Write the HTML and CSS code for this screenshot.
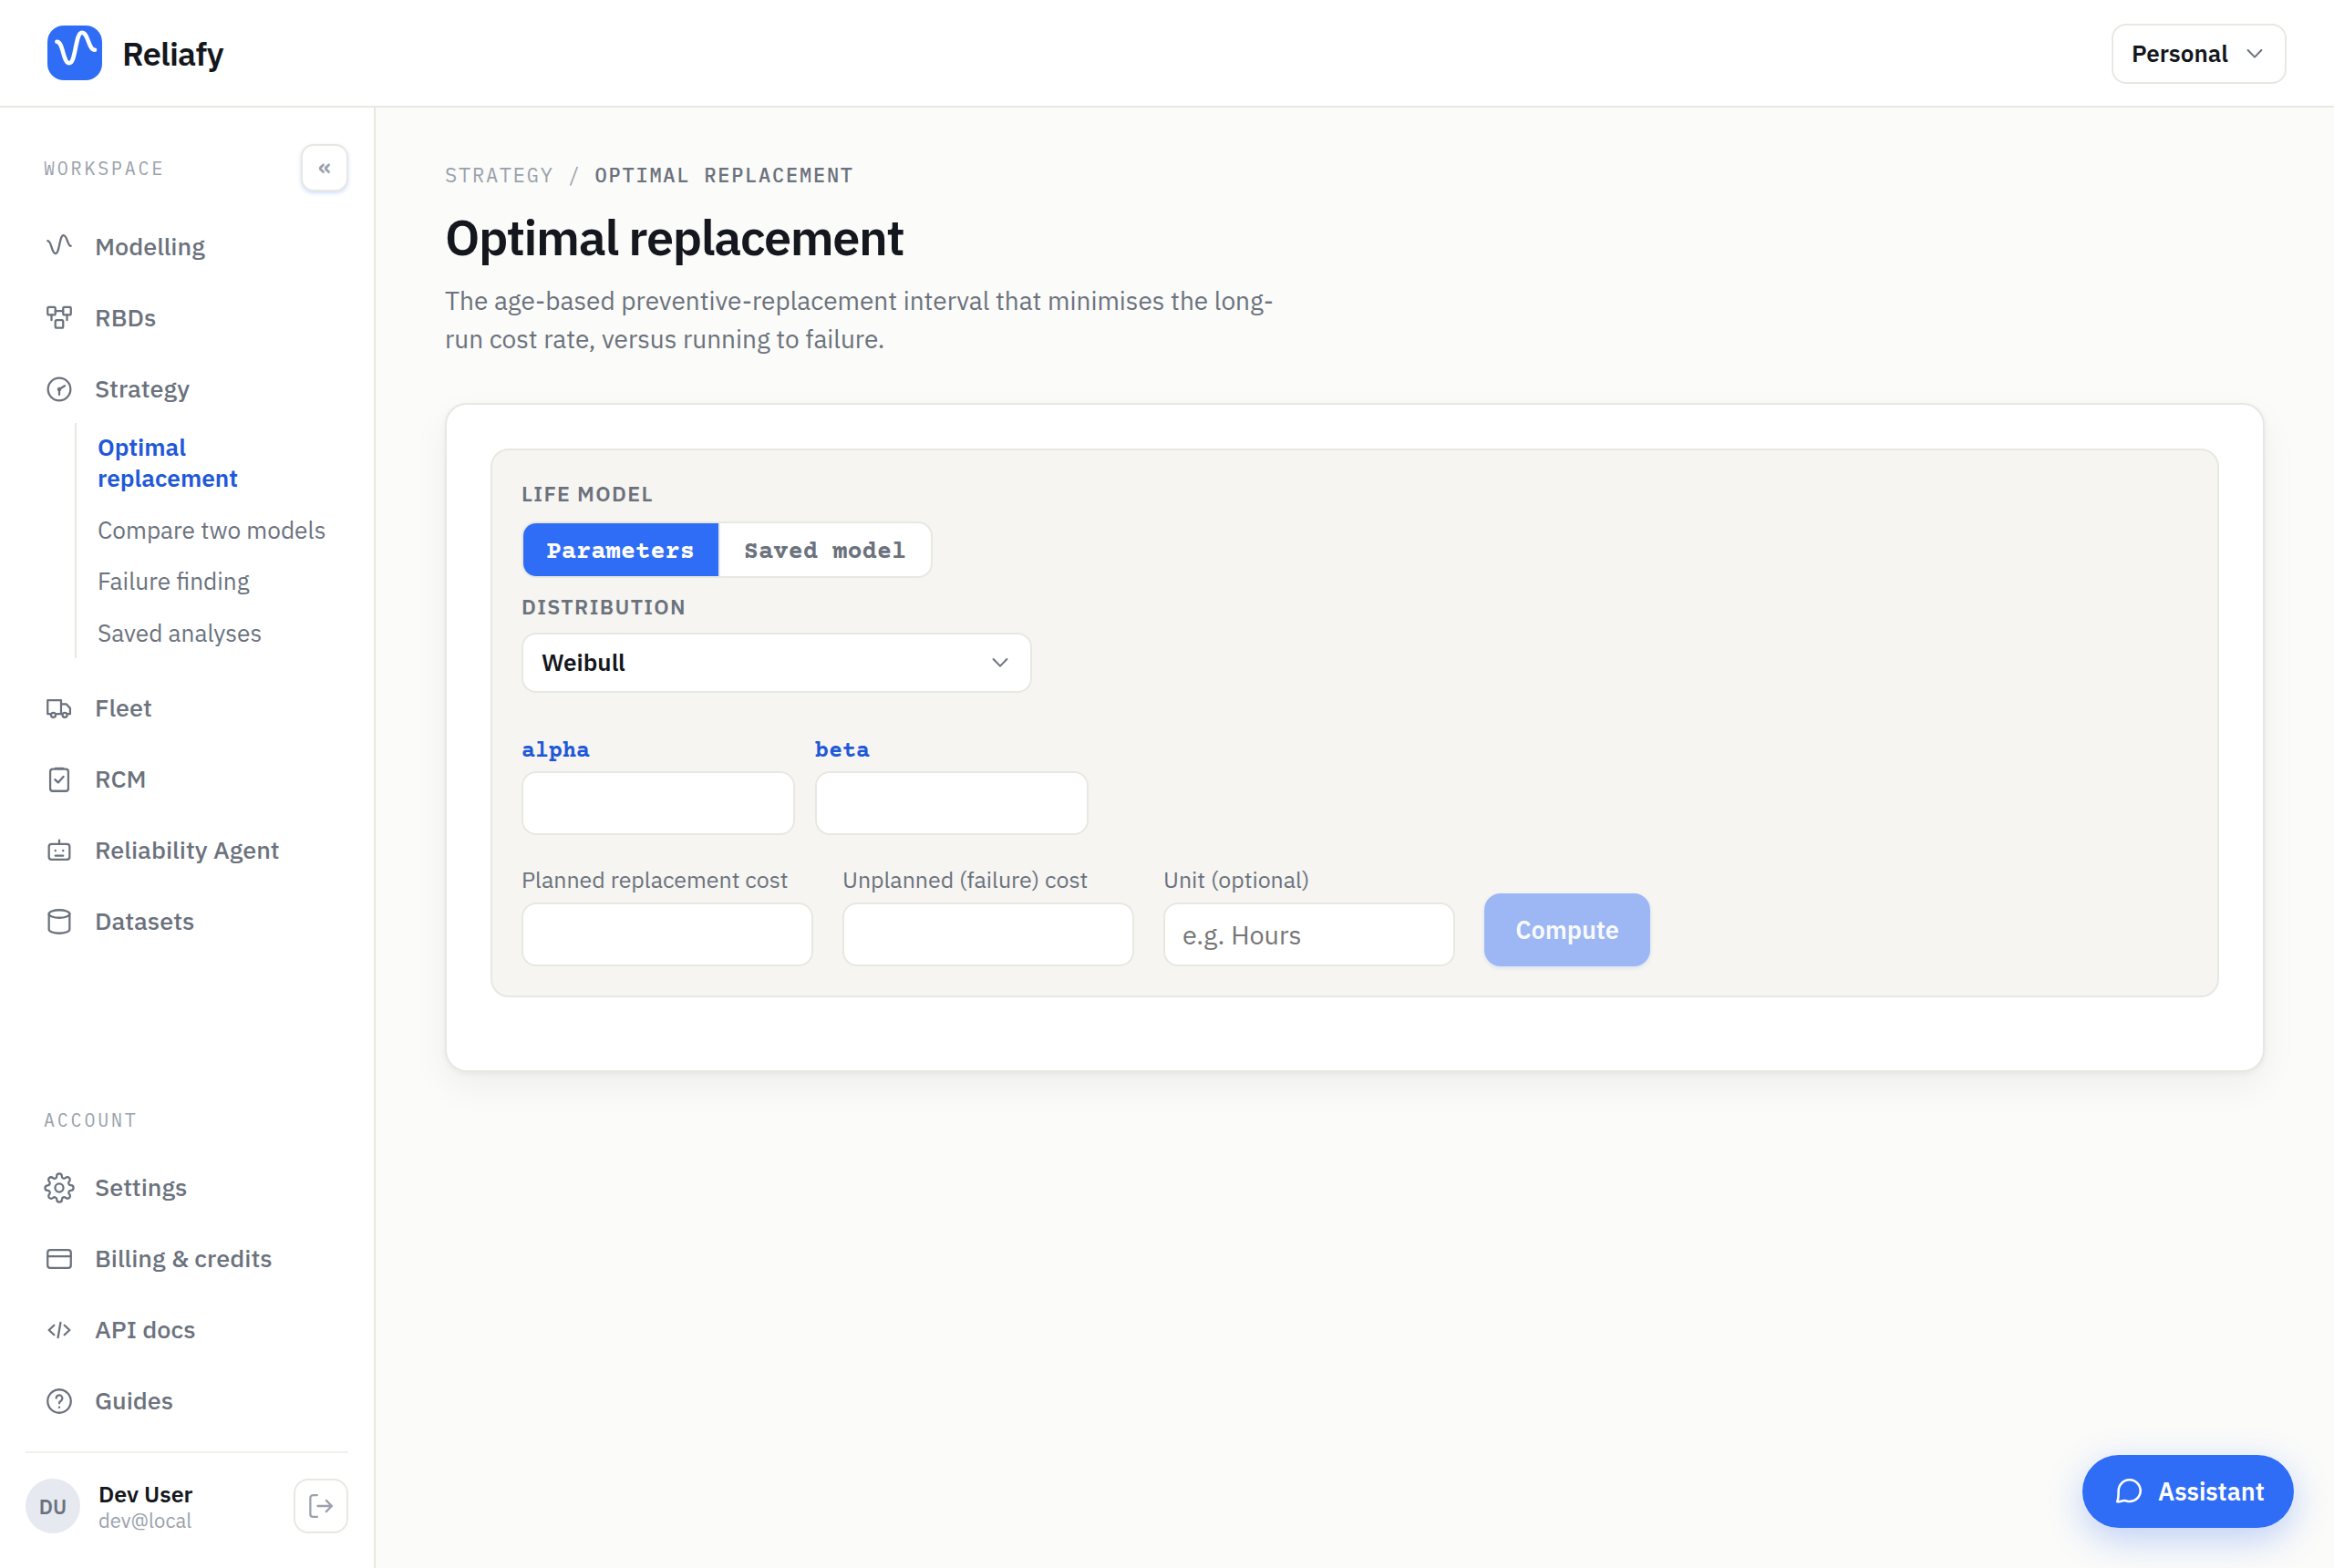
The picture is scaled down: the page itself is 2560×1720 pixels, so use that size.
FILE: index.html
```html
<!DOCTYPE html>
<html lang="en">
<head>
<meta charset="utf-8">
<title>Optimal replacement · Reliafy</title>
<link rel="stylesheet" href="styles.css">
</head>
<body>
<header class="topbar">
  <a class="brand">
    <svg class="brand-mark" viewBox="0 0 60 60"><path d="M10.4 17.8C17.6 17.8 16.8 41.2 24 41.2S30.6 7.7 37.8 7.7S44.8 26.8 52 26.8"/></svg>
    <span class="brand-name">Reliafy</span>
  </a>
  <button class="select account">
    <span>Personal</span>
    <svg class="chevron" viewBox="0 0 24 24"><path d="M4.600 8l7.400 7.600 7.400-7.600"/></svg>
  </button>
</header>
<div class="shell">
  <aside class="sidebar">
    <div class="side-head">
      <span class="side-label">WORKSPACE</span>
      <button class="collapse">«</button>
    </div>
    <nav class="nav">
      <a class="nav-item"><svg class="icon" viewBox="0 0 24 24"><path d="M3 7.2C6.2 7.2 5.9 17 9.1 17S12.1 2.9 15.2 2.9S18.3 11.2 21 11.2"/></svg>Modelling</a>
      <a class="nav-item"><svg class="icon" viewBox="0 0 24 24"><rect x="3" y="3.5" width="6" height="6" rx="1"/><rect x="15" y="3.5" width="6" height="6" rx="1"/><rect x="9" y="13.5" width="6" height="6" rx="1"/><path d="M9 6.5h6M6 9.5v4M18 9.5v4"/></svg>RBDs</a>
      <a class="nav-item"><svg class="icon" viewBox="0 0 24 24"><circle cx="12" cy="12" r="8.7"/><path d="M12 16.2V12l4.2-2.6"/><circle cx="12" cy="12" r=".8"/></svg>Strategy</a>
      <div class="subnav">
        <a class="sub-item active">Optimal replacement</a>
        <a class="sub-item">Compare two models</a>
        <a class="sub-item">Failure finding</a>
        <a class="sub-item">Saved analyses</a>
      </div>
      <a class="nav-item"><svg class="icon" viewBox="0 0 24 24"><path d="M4.800 16.400H3V5.700h10.400V16.400M10 16.400h4M13.400 8.700h4l3 3.200V16.400h-1.500"/><circle cx="7.400" cy="17.200" r="1.800"/><circle cx="16.300" cy="17.200" r="1.800"/></svg>Fleet</a>
      <a class="nav-item"><svg class="icon" viewBox="0 0 24 24"><rect x="5" y="4" width="14" height="17" rx="2"/><path d="M9 3.400h6M8.700 12.100l2.400 2.300 4.100-4.600"/></svg>RCM</a>
      <a class="nav-item"><svg class="icon" viewBox="0 0 24 24"><rect x="4" y="7" width="16" height="12" rx="2"/><path d="M12 7V4M9 11.900v.3M15 11.900v.3M9 16h6"/></svg>Reliability Agent</a>
      <a class="nav-item"><svg class="icon" viewBox="0 0 24 24"><ellipse cx="12" cy="6" rx="8" ry="3"/><path d="M4 6v12c0 1.700 3.600 3 8 3s8-1.300 8-3V6"/></svg>Datasets</a>
    </nav>
    <nav class="nav nav-account">
      <span class="side-label">ACCOUNT</span>
      <a class="nav-item"><svg class="icon" viewBox="0 0 24 24"><circle cx="12" cy="12" r="3.200"/><path d="M19.4 15a1.65 1.65 0 0 0 .33 1.82l.06.06a2 2 0 0 1 0 2.83 2 2 0 0 1-2.83 0l-.06-.06a1.65 1.65 0 0 0-1.82-.33 1.65 1.65 0 0 0-1 1.51V21a2 2 0 0 1-2 2 2 2 0 0 1-2-2v-.09A1.65 1.65 0 0 0 9 19.4a1.65 1.65 0 0 0-1.82.33l-.06.06a2 2 0 0 1-2.83 0 2 2 0 0 1 0-2.83l.06-.06a1.65 1.65 0 0 0 .33-1.82 1.65 1.65 0 0 0-1.51-1H3a2 2 0 0 1-2-2 2 2 0 0 1 2-2h.09A1.65 1.65 0 0 0 4.6 9a1.65 1.65 0 0 0-.33-1.82l-.06-.06a2 2 0 0 1 0-2.83 2 2 0 0 1 2.83 0l.06.06a1.65 1.65 0 0 0 1.82.33H9a1.65 1.65 0 0 0 1-1.51V3a2 2 0 0 1 2-2 2 2 0 0 1 2 2v.09a1.65 1.65 0 0 0 1 1.51 1.65 1.65 0 0 0 1.82-.33l.06-.06a2 2 0 0 1 2.83 0 2 2 0 0 1 0 2.83l-.06.06a1.65 1.65 0 0 0-.33 1.82V9a1.65 1.65 0 0 0 1.51 1H21a2 2 0 0 1 2 2 2 2 0 0 1-2 2h-.09a1.65 1.65 0 0 0-1.51 1z"/></svg>Settings</a>
      <a class="nav-item"><svg class="icon" viewBox="0 0 24 24"><rect x="3" y="5" width="18" height="14" rx="2"/><path d="M3 9.900h18"/></svg>Billing &amp; credits</a>
      <a class="nav-item"><svg class="icon" viewBox="0 0 24 24"><path d="M8 8.300l-4 3.700 4 3.700M16 8.300l4 3.700-4 3.700M13 6.200l-2 11.600"/></svg>API docs</a>
      <a class="nav-item"><svg class="icon" viewBox="0 0 24 24"><circle cx="12" cy="12" r="9"/><path d="M9.600 9.600a2.400 2.400 0 1 1 3.600 2.200c-.8.500-1.200.900-1.200 1.800M12 16.600v.3"/></svg>Guides</a>
    </nav>
    <div class="user">
      <span class="avatar">DU</span>
      <span class="who"><b class="who-name">Dev User</b><span class="who-mail">dev@local</span></span>
      <button class="logout"><svg class="icon" viewBox="0 0 24 24"><path d="M9.100 20.400H5.800a2 2 0 0 1-2-2V5.600a2 2 0 0 1 2-2h3.300M16.100 16.300l4.300-4.300-4.300-4.300M20.400 12H9.500"/></svg></button>
    </div>
  </aside>
  <main class="content">
    <div class="crumbs">STRATEGY / <b>OPTIMAL REPLACEMENT</b></div>
    <h1 class="title">Optimal replacement</h1>
    <p class="lede">The age-based preventive-replacement interval that minimises the long-run cost rate, versus running to failure.</p>
    <section class="card">
      <div class="panel">
        <div class="group-label">LIFE MODEL</div>
        <div class="segmented">
          <button class="segment on">Parameters</button>
          <button class="segment">Saved model</button>
        </div>
        <div class="group-label">DISTRIBUTION</div>
        <button class="select distribution">
          <span>Weibull</span>
          <svg class="chevron" viewBox="0 0 24 24"><path d="M4.600 8l7.400 7.600 7.400-7.600"/></svg>
        </button>
        <div class="params">
          <label class="field param"><span class="param-label">alpha</span><input class="input" type="text"></label>
          <label class="field param"><span class="param-label">beta</span><input class="input" type="text"></label>
        </div>
        <div class="costs">
          <label class="field"><span class="field-label">Planned replacement cost</span><input class="input" type="text"></label>
          <label class="field"><span class="field-label">Unplanned (failure) cost</span><input class="input" type="text"></label>
          <label class="field"><span class="field-label">Unit (optional)</span><input class="input" type="text" placeholder="e.g. Hours"></label>
          <button class="compute">Compute</button>
        </div>
      </div>
    </section>
  </main>
</div>
<button class="assistant">
  <svg class="icon" viewBox="0 0 24 24"><path d="M21 11.500a8.400 8.400 0 0 1-8.500 8.300c-1.500 0-2.900-.7-4-.7-1.600 0-3.500.9-5.500.9 1-2.200.9-4.500 1-8.500a8.500 8.500 0 0 1 17 0z"/></svg>
  <span>Assistant</span>
</button>
</body>
</html>
```
FILE: styles.css
```css
:root {
  --ink: #14171d;
  --muted: #6b727d;
  --faint: #9aa1ab;
  --line: #e8e8e2;
  --blue: #2f6df6;
  --link: #2158d8;
  --sans: "IBM Plex Sans", Roboto, sans-serif;
  --mono: "IBM Plex Mono", "Liberation Mono", monospace;
  --slab: "Courier Prime", "FreeMono", "Liberation Mono", monospace;
}
* { box-sizing: border-box; }
body {
  margin: 0;
  height: 1720px;
  display: flex;
  flex-direction: column;
  font-family: var(--sans);
  color: var(--ink);
  background: #fbfbf9;
}
button, input { font-family: inherit; margin: 0; }
svg { fill: none; stroke: currentColor; stroke-linecap: round; stroke-linejoin: round; flex: none; }
.icon { width: 34px; height: 34px; stroke-width: 1.6; }

.topbar {
  height: 118px;
  flex: none;
  display: flex;
  align-items: center;
  justify-content: space-between;
  padding: 0 52px;
  background: #fff;
  border-bottom: 2px solid var(--line);
}
.brand { display: flex; align-items: center; gap: 22px; }
.brand-mark { width: 60px; height: 60px; border-radius: 18px; background: var(--blue); color: #fff; stroke-width: 4.6; }
.brand-name { padding-top: 2px; font-size: 36px; font-weight: 600; letter-spacing: -0.02em; line-height: 48px; }
.select {
  display: flex;
  align-items: center;
  justify-content: space-between;
  height: 66px;
  padding: 0 21px 0 20px;
  border: 2px solid var(--line);
  border-radius: 16px;
  background: #fff;
  color: var(--ink);
  font-size: 26px;
  font-weight: 600;
}
.select span { padding-bottom: 2px; }
.chevron { width: 24px; height: 24px; stroke-width: 2; color: var(--muted); }
.account { width: 192px; margin-top: 2px; }

.shell { flex: 1; display: flex; min-height: 0; }
.sidebar {
  width: 412px;
  flex: none;
  display: flex;
  flex-direction: column;
  padding: 40px 28px 38px;
  background: #fff;
  border-right: 2px solid var(--line);
}
.side-head { display: flex; align-items: center; justify-content: space-between; height: 52px; margin-bottom: 22px; }
.side-label { padding-left: 20px; font: 400 20px/26px var(--mono); letter-spacing: 0.14em; color: var(--faint); }
.side-head .side-label { padding-top: 2px; }
.collapse {
  width: 52px;
  height: 52px;
  padding: 0 0 4px;
  border: 2px solid var(--line);
  border-radius: 14px;
  background: #fff;
  color: var(--faint);
  font-size: 26px;
  font-weight: 600;
  line-height: 1;
  box-shadow: 0 2px 4px rgba(47, 109, 246, .22);
}
.nav { display: flex; flex-direction: column; }
.nav-item {
  display: flex;
  align-items: center;
  gap: 22px;
  height: 78px;
  padding: 0 20px 2px;
  font-size: 27px;
  font-weight: 500;
  line-height: 34px;
  color: var(--muted);
}
.nav-item .icon { margin-top: 2px; }
.subnav {
  display: flex;
  flex-direction: column;
  margin: -2px 0 16px 54px;
  padding-left: 23px;
  border-left: 2px solid var(--line);
  height: 258px;
}
.sub-item { padding: 9px 0 13.6px; font-size: 26.24px; line-height: 34px; color: var(--muted); white-space: nowrap; }
.sub-item.active { font-weight: 600; color: var(--link); white-space: normal; width: 200px; }
.nav-account { margin-top: auto; }
.nav-account .side-label { margin-bottom: 22px; }
.user {
  display: flex;
  align-items: center;
  margin-top: 16px;
  padding-top: 28px;
  border-top: 2px solid #f1f1ec;
}
.avatar {
  width: 60px;
  height: 60px;
  border-radius: 50%;
  background: #e7e9f1;
  color: var(--muted);
  display: flex;
  align-items: center;
  justify-content: center;
  font-size: 22px;
  font-weight: 600;
}
.who { display: flex; flex-direction: column; flex: 1; margin-left: 20px; padding-top: 2px; }
.who-name { font-size: 25px; font-weight: 600; line-height: 30px; }
.who-mail { font-size: 22px; line-height: 28px; color: var(--faint); }
.logout {
  width: 60px;
  height: 60px;
  padding: 0;
  display: flex;
  align-items: center;
  justify-content: center;
  border: 2px solid var(--line);
  border-radius: 16px;
  background: #fff;
  color: var(--faint);
}

.content { flex: 1; padding: 56px 76px 0; }
.crumbs { font: 400 22px/36px var(--mono); letter-spacing: 0.08em; color: var(--faint); }
.crumbs b { font-weight: 500; color: var(--muted); }
.title { margin: 18px 0 0; font-size: 54px; font-weight: 600; line-height: 64px; letter-spacing: -0.0255em; }
.lede { margin: 17px 0 0; width: 940px; font-size: 28px; line-height: 42px; color: var(--muted); }
.card {
  margin-top: 49px;
  padding: 48px 48px 80px;
  background: #fff;
  border: 2px solid var(--line);
  border-radius: 24px;
  box-shadow: 0 2px 6px rgba(20, 23, 29, .05), 0 16px 40px rgba(20, 23, 29, .05);
}
.panel { padding: 32px; border: 2px solid var(--line); border-radius: 20px; background: #f6f5f1; }
.group-label { font-size: 23px; font-weight: 600; line-height: 30px; letter-spacing: 0.06em; color: var(--muted); }
.segmented {
  display: inline-flex;
  height: 62px;
  margin: 16px 0;
  border: 2px solid var(--line);
  border-radius: 16px;
  overflow: hidden;
  background: #fff;
  vertical-align: top;
}
.segment {
  padding: 5px 26px 0 25.6px;
  border: 0;
  background: none;
  font: 700 27.1px/34px var(--slab);
  color: var(--muted);
}
.segment + .segment { border-left: 2px solid var(--line); padding-right: 27px; }
.segment.on { background: var(--blue); color: #fff; }
.distribution { width: 560px; margin-top: 14px; }
.params { display: flex; gap: 22px; margin-top: 46px; }
.field { display: flex; flex-direction: column; width: 320px; }
.param { width: 300px; }
.param-label { padding-top: 2px; font: 700 25px/34px var(--slab); color: var(--link); margin-bottom: 4px; }
.field-label { font-size: 24.96px; line-height: 34px; color: var(--muted); margin-bottom: 8px; }
.input {
  height: 70px;
  width: 100%;
  padding: 0 20px 0 19px;
  border: 2px solid var(--line);
  border-radius: 16px;
  background: #fff;
  font-size: 28.8px;
  color: var(--ink);
}
.input::placeholder { color: #757575; }
.costs { display: flex; align-items: flex-end; gap: 32px; margin-top: 32px; }
.compute {
  width: 182px;
  height: 80px;
  padding: 0 0 2px;
  border: 0;
  border-radius: 18px;
  background: #9cb7f3;
  color: #f9fafc;
  font-size: 27px;
  font-weight: 600;
  box-shadow: 0 2px 4px rgba(47, 109, 246, .14);
}
.assistant {
  position: absolute;
  right: 44px;
  bottom: 44px;
  display: flex;
  align-items: center;
  gap: 15px;
  width: 232px;
  height: 80px;
  padding: 0 0 0 34px;
  border: 0;
  border-radius: 40px;
  background: var(--blue);
  color: #fff;
  font-size: 27px;
  font-weight: 600;
  box-shadow: 0 12px 40px rgba(47, 109, 246, .3);
}
.assistant .icon { stroke-width: 1.8; }
.assistant span { padding-bottom: 1px; }
```
